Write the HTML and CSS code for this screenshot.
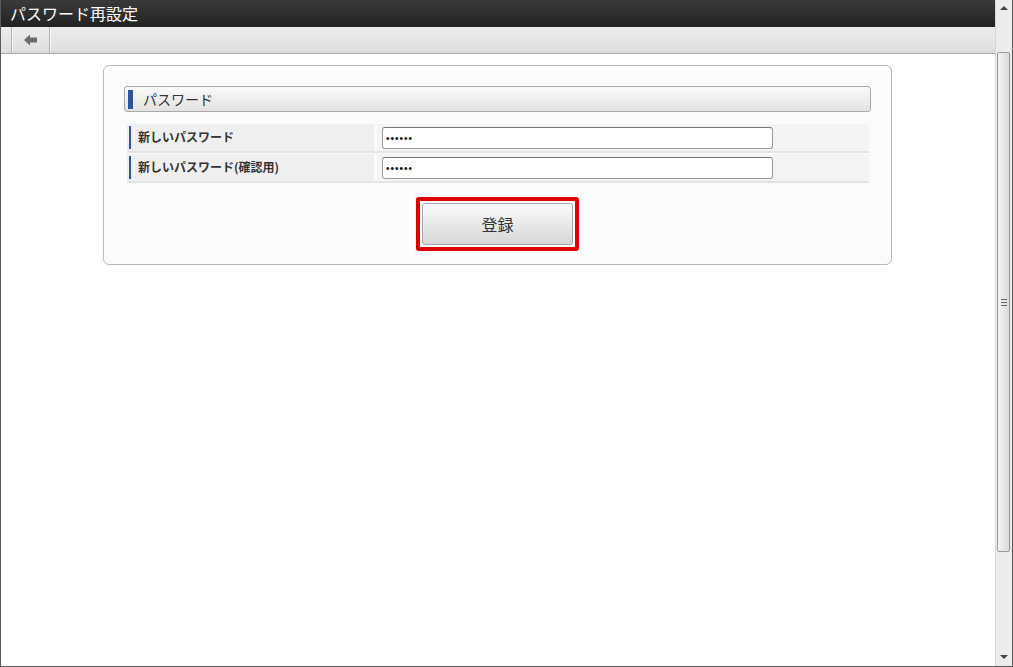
FILE: index.html
```html
<!DOCTYPE html>
<html lang="ja">
<head>
<meta charset="utf-8">
<title>パスワード再設定</title>
<link rel="stylesheet" href="styles.css">
</head>
<body>
<div class="window">
  <div class="main">
    <div class="titlebar">パスワード再設定</div>
    <div class="toolbar">
      <div class="tool-sep"></div>
      <div class="tool-btn">
        <svg width="14" height="12" viewBox="0 0 14 12"><path d="M0 6 L6 0.5 L6 3.5 L13 3.5 L13 8.5 L6 8.5 L6 11.5 Z" fill="#6b6b6b"/></svg>
      </div>
      <div class="tool-sep"></div>
    </div>
    <div class="content">
      <div class="panel">
        <div class="section-head"><span class="section-bar"></span><span class="section-title">パスワード</span></div>
        <div class="form">
          <div class="row">
            <div class="label"><span>新しいパスワード</span></div>
            <div class="field"><input type="password" value="aaaaaa" class="pw"></div>
          </div>
          <div class="row">
            <div class="label"><span>新しいパスワード(確認用)</span></div>
            <div class="field"><input type="password" value="aaaaaa" class="pw"></div>
          </div>
        </div>
        <div class="actions">
          <div class="highlight"><button class="btn">登録</button></div>
        </div>
      </div>
    </div>
  </div>
  <div class="scrollbar">
    <div class="arrow up"></div>
    <div class="thumb"><div class="grip"></div></div>
    <div class="track"></div>
    <div class="arrow down"></div>
  </div>
</div>
</body>
</html>
```
FILE: styles.css
```css
html, body {
  margin: 0;
  padding: 0;
  height: 100%;
  overflow: hidden;
}
body {
  font-family: "Noto Sans CJK JP", "Liberation Sans", sans-serif;
  background: #fff;
}
.window {
  box-sizing: border-box;
  width: 1013px;
  height: 667px;
  border: 1px solid #5a5a5a;
  border-top: 0;
  display: flex;
}
.main {
  flex: 1;
  display: flex;
  flex-direction: column;
  min-width: 0;
}
.titlebar {
  height: 27px;
  background: linear-gradient(#3a3a3a, #222);
  color: #fff;
  font-size: 16px;
  line-height: 27px;
  padding-left: 9px;
}
.toolbar {
  height: 26px;
  background: linear-gradient(#ececec, #dedede);
  border-bottom: 1px solid #a8a8a8;
  display: flex;
  padding-left: 10px;
}
.tool-sep {
  width: 1px;
  background: #b4b4b4;
  border-right: 1px solid #f6f6f6;
}
.tool-btn {
  width: 36px;
  display: flex;
  align-items: center;
  justify-content: center;
}
.content {
  flex: 1;
  background: #fff;
  padding: 11px 0 0 102px;
}
.panel {
  box-sizing: border-box;
  width: 789px;
  height: 200px;
  border: 1px solid #b8b8b8;
  border-radius: 6px;
  background: #fafbfd;
  padding: 20px 20px 0 20px;
}
.section-head {
  box-sizing: border-box;
  height: 26px;
  border: 1px solid #a9a9a9;
  border-radius: 3px;
  background: linear-gradient(#fafafa, #e2e2e2);
  display: flex;
  align-items: center;
  padding-left: 3px;
}
.section-bar {
  width: 5px;
  height: 19px;
  background: #2f5298;
}
.section-title {
  margin-left: 10px;
  font-size: 14px;
  color: #333;
}
.form {
  margin-top: 12px;
  padding: 0 2px 0 3px;
}
.row {
  display: flex;
  gap: 3px;
  height: 27px;
  border-bottom: 2px solid #e4e4e4;
  margin-bottom: 1px;
}
.label {
  box-sizing: border-box;
  width: 247px;
  background: #efefef;
  padding: 2px 0 2px 2px;
  display: flex;
}
.label span {
  border-left: 2px solid #2f5298;
  padding-left: 7px;
  font-size: 12px;
  font-weight: bold;
  color: #333;
  line-height: 21px;
  flex: 1;
}
.field {
  flex: 1;
  background: #f4f4f4;
  padding: 3px 0 0 5px;
}
.pw {
  display: block;
  box-sizing: border-box;
  width: 391px;
  height: 22px;
  border: 1px solid #9a9a9a;
  border-top-color: #777;
  border-radius: 3px;
  background: #fff;
  font-size: 10px;
  padding: 0 3px;
  margin: 0;
  font-family: "Liberation Sans", sans-serif;
  color: #000;
  letter-spacing: 1px;
}
.actions {
  display: flex;
  justify-content: center;
  margin-top: 14px;
}
.highlight {
  border: 4px solid #dd0000;
  border-radius: 3px;
  padding: 2px;
  background: #fff;
}
.btn {
  display: block;
  box-sizing: border-box;
  width: 151px;
  height: 42px;
  border: 1px solid #a8a8a8;
  border-radius: 3px;
  background: linear-gradient(#fbfbfb, #d6d6d6);
  font-family: "Noto Sans CJK JP", sans-serif;
  font-size: 16px;
  color: #333;
  padding: 0;
}
.scrollbar {
  width: 16px;
  background: #ececec;
  border-left: 1px solid #d6d6d6;
  display: flex;
  flex-direction: column;
}
.arrow {
  height: 17px;
  position: relative;
}
.arrow.up::after {
  content: "";
  position: absolute;
  left: 4px;
  top: 6px;
  border-left: 4px solid transparent;
  border-right: 4px solid transparent;
  border-bottom: 4px solid #444;
}
.arrow.down::after {
  content: "";
  position: absolute;
  left: 4px;
  top: 6px;
  border-left: 4px solid transparent;
  border-right: 4px solid transparent;
  border-top: 4px solid #444;
}
.thumb {
  margin-top: 35px;
  height: 500px;
  margin-left: 1px;
  width: 13px;
  border: 1px solid #9a9a9a;
  border-radius: 2px;
  background: linear-gradient(90deg, #f4f4f4, #dadada);
  display: flex;
  align-items: center;
  justify-content: center;
  box-sizing: border-box;
}
.grip {
  width: 6px;
  height: 5px;
  border-top: 1px solid #666;
  border-bottom: 1px solid #666;
  position: relative;
}
.grip::after {
  content: "";
  position: absolute;
  left: 0;
  right: 0;
  top: 2px;
  border-top: 1px solid #666;
}
.track {
  flex: 1;
}
```
